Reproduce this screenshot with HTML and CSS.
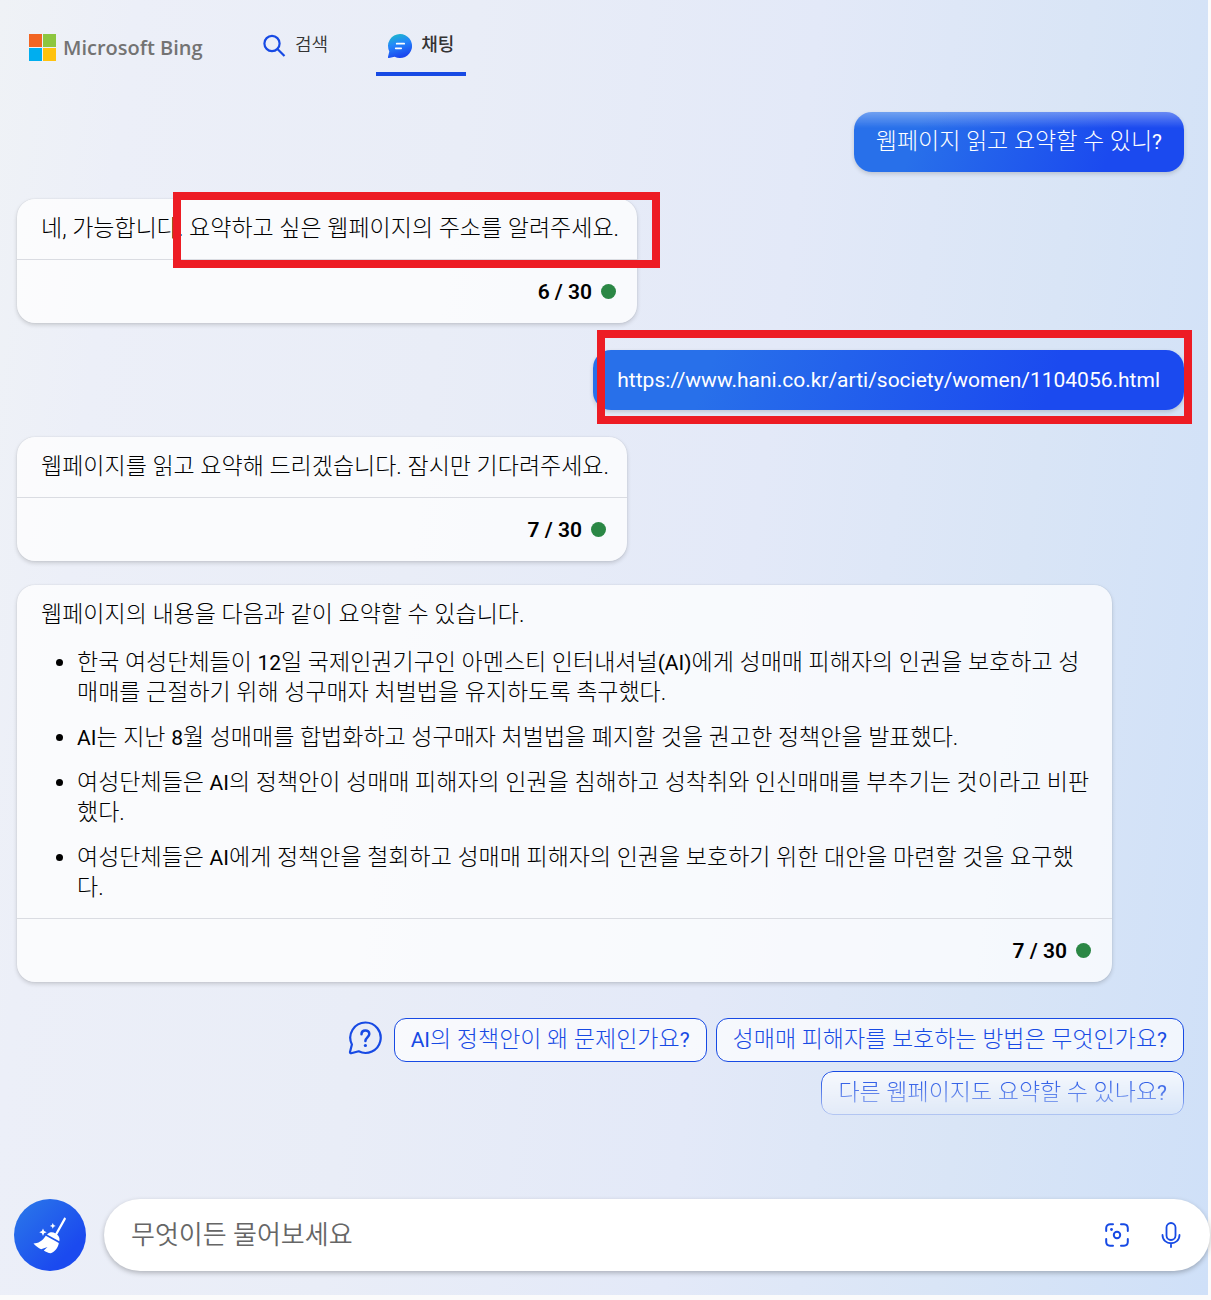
FILE: index.html
```
<!DOCTYPE html>
<html lang="ko">
<head>
  <meta charset="UTF-8" />
  <meta name="viewport" content="width=device-width, initial-scale=1.0" />
  <title>Microsoft Bing 채팅</title>
  <link rel="stylesheet" href="styles.css">
</head>
<body>
  <div class="page">
    <header class="header">
      <a class="logo" href="#">
        <svg width="27" height="27" viewBox="0 0 27 27" aria-hidden="true">
          <path fill="#f26522" d="M0 0h13v13H0z"/>
          <path fill="#8dc63f" d="M14 0h13v13H14z"/>
          <path fill="#00aeef" d="M0 14h13v13H0z"/>
          <path fill="#ffc20e" d="M14 14h13v13H14z"/>
        </svg>
        <span>Microsoft Bing</span>
      </a>
      <nav class="tabs">
        <a class="tab" href="#">
          <svg width="24" height="24" viewBox="0 0 24 24" fill="none" stroke="#174ae4" stroke-width="2.2" aria-hidden="true">
            <circle cx="10" cy="9.500" r="7.600"/>
            <path d="M15.500 15l7 7"/>
          </svg>
          <span>검색</span>
        </a>
        <a class="tab active" href="#">
          <svg width="24" height="24" viewBox="0 0 24 24" aria-hidden="true">
            <defs>
              <linearGradient id="chatFill" x1="0" y1="0" x2="0.3" y2="1">
                <stop offset="0" stop-color="#1bc0c4"/>
                <stop offset="0.5" stop-color="#2486fb"/>
                <stop offset="1" stop-color="#1b48ef"/>
              </linearGradient>
            </defs>
            <path fill="url(#chatFill)" d="M12 0a12 12 0 1 1-5.400 22.700L1 24a1 1 0 0 1-1-1.300l1.300-5.300A12 12 0 0 1 12 0z"/>
            <path stroke="#fff" stroke-width="1.700" stroke-linecap="round" d="M8.700 9.700h7.500M7.700 14.300h5.500"/>
          </svg>
          <span>채팅</span>
        </a>
      </nav>
    </header>

    <main class="chat">
      <div class="bubble faded">웹페이지 읽고 요약할 수 있니<span class="latin">?</span></div>

      <section class="card marked">
        <p class="text">네, 가능합니다. 요약하고 싶은 웹페이지의 주소를 알려주세요.</p>
        <div class="count">6 / 30 <i class="dot"></i></div>
        <span class="mark mark-answer"></span>
      </section>

      <div class="bubble marked"><span class="latin">https://www.hani.co.kr/arti/society/women/1104056.html</span>
        <span class="mark mark-url"></span>
      </div>

      <section class="card">
        <p class="text">웹페이지를 읽고 요약해 드리겠습니다. 잠시만 기다려주세요.</p>
        <div class="count">7 / 30 <i class="dot"></i></div>
      </section>

      <section class="card next">
        <div class="text">
          <p>웹페이지의 내용을 다음과 같이 요약할 수 있습니다.</p>
          <ul>
            <li>한국 여성단체들이 <span class="latin">12</span>일 국제인권기구인 아멘스티 인터내셔널<span class="latin">(AI)</span>에게 성매매 피해자의 인권을 보호하고 성매매를 근절하기 위해 성구매자 처벌법을 유지하도록 촉구했다.</li>
            <li><span class="latin">AI</span>는 지난 <span class="latin">8</span>월 성매매를 합법화하고 성구매자 처벌법을 폐지할 것을 권고한 정책안을 발표했다.</li>
            <li>여성단체들은 <span class="latin">AI</span>의 정책안이 성매매 피해자의 인권을 침해하고 성착취와 인신매매를 부추기는 것이라고 비판했다.</li>
            <li>여성단체들은 <span class="latin">AI</span>에게 정책안을 철회하고 성매매 피해자의 인권을 보호하기 위한 대안을 마련할 것을 요구했다.</li>
          </ul>
        </div>
        <div class="count">7 / 30 <i class="dot"></i></div>
      </section>

      <div class="suggestions">
        <svg class="help" width="34" height="34" viewBox="0 0 34 34" fill="none" stroke="#174ae4" stroke-width="2.2" stroke-linecap="round" stroke-linejoin="round" aria-hidden="true">
          <path d="M17.500 1.500a15.200 15.200 0 1 1-6.800 28.800l-7.500 1.900a1 1 0 0 1-1.200-1.200l1.900-7.500A15.200 15.200 0 0 1 17.500 1.500z"/>
          <path stroke-width="2.500" d="M13.500 13.200c0-5 7.800-5 7.800-.2 0 3.200-3.900 3.500-3.900 7"/>
          <circle cx="17.400" cy="24.500" r="1.600" fill="#174ae4" stroke="none"/>
        </svg>
        <button class="chip"><span class="latin">AI</span>의 정책안이 왜 문제인가요<span class="latin">?</span></button>
        <button class="chip">성매매 피해자를 보호하는 방법은 무엇인가요<span class="latin">?</span></button>
        <button class="chip fading">다른 웹페이지도 요약할 수 있나요<span class="latin">?</span></button>
      </div>
    </main>

    <form class="composer">
      <button type="button" class="broom" aria-label="새 토픽">
        <svg width="34" height="38" viewBox="0 0 34 38" fill="#fff" aria-hidden="true">
          <path d="M31.200 1.500a1.300 1.300 0 0 1 1.500 1.900l-9 16.200-2-1.200z"/>
          <path d="M14 18.500c3-3 6-2.500 8.500-1 3 1.700 4.700 4.200 3.800 7.700z"/>
          <path d="M12.800 19.700l13 7.300c-.500 4-3.300 8.500-8 10.200-2.500-.200-5-1.200-7-2.700l3.700-3.500-6.300 2.200c-2.800-1.200-5.700-3.200-7.700-5.700 4.500-.200 9-2.500 12.300-7.800z"/>
          <path d="M10 12.500l1.100 2.600 2.600 1.100-2.600 1.100L10 20l-1.100-2.700-2.600-1.100 2.600-1.100zM19.800 7l.9 2 2 .9-2 .9-.9 2-.9-2-2-.9 2-.9z"/>
        </svg>
      </button>
      <div class="searchbox">
        <input type="text" aria-label="메시지" placeholder="무엇이든 물어보세요" />
        <button type="button" class="tool" aria-label="이미지 검색">
          <svg width="24" height="24" viewBox="0 0 24 24" fill="none" stroke="#174ae4" stroke-width="2" stroke-linecap="round" aria-hidden="true">
            <path d="M1.200 8V5a4 4 0 0 1 4-3.800H8M16 1.200h3A4 4 0 0 1 22.800 5v3M22.800 16v3a4 4 0 0 1-3.800 3.800h-3M8 22.800H5A4 4 0 0 1 1.200 19v-3"/>
            <circle cx="12" cy="12" r="3.200"/>
            <circle cx="6.500" cy="6.500" r="1.400" fill="#174ae4" stroke="none"/>
          </svg>
        </button>
        <button type="button" class="tool" aria-label="음성 입력">
          <svg width="20" height="26" viewBox="0 0 20 26" fill="none" stroke="#174ae4" stroke-width="1.800" stroke-linecap="round" aria-hidden="true">
            <rect x="5.500" y="1" width="9" height="17" rx="4.500"/>
            <path d="M1.500 13c0 11 17 11 17 0M10 21.200V25"/>
          </svg>
        </button>
      </div>
    </form>
  </div>
</body>
</html>
```

FILE: styles.css
```
* {
  box-sizing: border-box;
}
body {
  margin: 0;
  padding-bottom: 5px;
  background: #fbfbfb;
  color: #000;
  font-family: Roboto, "Noto Sans CJK KR", sans-serif;
  font-size: 23px;
  font-weight: 300;
  line-height: 30px;
}
p, ul {
  margin: 0;
}
button, input {
  font: inherit;
}
.page {
  background: linear-gradient(97deg, #eff2f6 0%, #eceff8 10%, #e9edf7 35%, #e3e9f8 60%, #d9e5f6 80%, #cfe0f8 100%) no-repeat;
  background-size: calc(100% - 3px) 100%;
}
.latin {
  font-size: 21px;
  font-weight: 400;
  line-height: 1;
}

/* header */
.header {
  display: flex;
  height: 76px;
  padding-left: 29px;
}
.logo {
  display: flex;
  align-items: center;
  gap: 7px;
  width: 221px;
  padding-top: 19px;
  color: #737373;
  font-family: "Open Sans", sans-serif;
  font-size: 20px;
  font-weight: 600;
  text-decoration: none;
}
.tabs {
  display: flex;
  gap: 36px;
}
.tab {
  display: flex;
  align-items: center;
  gap: 9px;
  padding: 20px 12px 0;
  border-bottom: 4px solid transparent;
  color: #333;
  font-size: 18px;
  font-weight: 350;
  text-decoration: none;
}
.tab span {
  padding-bottom: 2px;
}
.tab.active {
  border-color: #174ae4;
  font-weight: 500;
}

/* conversation */
.chat {
  display: flex;
  flex-direction: column;
  align-items: flex-start;
  gap: 27px;
  padding: 36px 27px 84px 17px;
}
.bubble {
  align-self: flex-end;
  padding: 15px 24px;
  border-radius: 18px;
  background: linear-gradient(110deg, #2870ea 20%, #1b4aef 77%);
  box-shadow: 0 2px 4px rgba(0, 0, 0, 0.16);
  color: #fff;
}
.bubble.faded {
  padding: 15px 22px;
  background: linear-gradient(rgba(220, 232, 250, 0.4), rgba(220, 232, 250, 0) 16px), linear-gradient(110deg, #2870ea 20%, #1b4aef 77%);
}
.card {
  max-width: 1095px;
  border-radius: 18px;
  background: rgba(255, 255, 255, 0.75);
  box-shadow: 0 2px 4px rgba(0, 0, 0, 0.16), 0 0 1px rgba(0, 0, 0, 0.2);
}
.card.next {
  margin-top: -3px;
}
.text {
  padding: 15px 18px 15px 24px;
}
.text ul {
  padding: 18px 0 0 36px;
}
.text li + li {
  margin-top: 15px;
}
.count {
  display: flex;
  align-items: center;
  justify-content: flex-end;
  gap: 9px;
  height: 64px;
  padding-right: 21px;
  border-top: 1px solid #dadce2;
  font-size: 21px;
  font-weight: 600;
}
.dot {
  width: 15px;
  height: 15px;
  border-radius: 50%;
  background: #2b8745;
}

/* red marker frames over the messages */
.marked {
  position: relative;
}
.mark {
  position: absolute;
  border: 8px solid #ed1c24;
}
.mark-answer {
  top: -7px;
  right: -23px;
  left: 156px;
  height: 76px;
}
.mark-url {
  top: -20px;
  right: -8px;
  bottom: -14px;
  left: 4px;
}

/* suggestions */
.suggestions {
  display: flex;
  flex-wrap: wrap;
  align-self: flex-end;
  justify-content: flex-end;
  gap: 9px;
  margin-top: 9px;
}
.help {
  margin: 3px 3px 0 0;
}
.chip {
  height: 44px;
  padding: 0 16px;
  border: 1px solid #174ae4;
  border-radius: 12px;
  background: rgba(255, 255, 255, 0.7);
  color: #174ae4;
}
.chip.fading {
  -webkit-mask-image: linear-gradient(#000 10%, rgba(0, 0, 0, 0.2));
  mask-image: linear-gradient(#000 10%, rgba(0, 0, 0, 0.2));
}

/* composer */
.composer {
  display: flex;
  gap: 18px;
  padding: 0 1px 24px 14px;
}
.broom {
  display: flex;
  align-items: center;
  justify-content: center;
  width: 72px;
  height: 72px;
  padding: 0;
  border: 0;
  border-radius: 50%;
  background: linear-gradient(135deg, #2870ea 15%, #1b4aef 75%);
}
.searchbox {
  display: flex;
  flex: 1;
  align-items: center;
  gap: 24px;
  height: 72px;
  padding: 0 24px 0 27px;
  border-radius: 36px;
  background: #fff;
  box-shadow: 0 2px 5px rgba(0, 0, 0, 0.25);
}
.searchbox input {
  flex: 1;
  min-width: 0;
  padding: 0;
  border: 0;
  outline: 0;
  background: none;
  font-size: 26px;
  font-weight: 350;
}
.searchbox input::placeholder {
  color: #666;
}
.tool {
  display: flex;
  align-items: center;
  justify-content: center;
  width: 30px;
  height: 30px;
  padding: 0;
  border: 0;
  background: none;
}
```
